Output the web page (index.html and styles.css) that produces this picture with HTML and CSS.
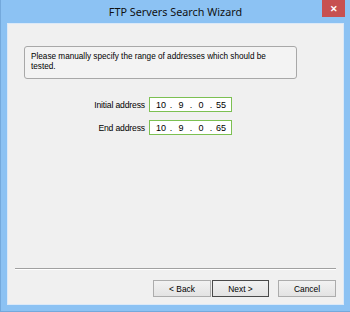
FILE: index.html
```html
<!DOCTYPE html>
<html lang="en">
<head>
    <meta charset="UTF-8">
    <title>FTP Servers Search Wizard</title>
    <link rel="stylesheet" href="styles.css">
</head>
<body>
    <div class="window">
        <div class="titlebar">
            <span class="title">FTP Servers Search Wizard</span>
            <span class="close">&#x2715;</span>
        </div>

        <div class="panel">
            <div class="hint">Please manually specify the range of addresses which should be tested.</div>

            <div class="fields">
                <label>Initial address</label>
                <div class="ip">
                    <span class="oct">10</span><span class="dot">.</span>
                    <span class="oct">9</span><span class="dot">.</span>
                    <span class="oct">0</span><span class="dot">.</span>
                    <span class="oct">55</span>
                </div>

                <label>End address</label>
                <div class="ip">
                    <span class="oct">10</span><span class="dot">.</span>
                    <span class="oct">9</span><span class="dot">.</span>
                    <span class="oct">0</span><span class="dot">.</span>
                    <span class="oct">65</span>
                </div>
            </div>

            <div class="spacer"></div>

            <div class="separator"></div>

            <div class="buttons">
                <button class="btn">&lt; Back</button>
                <button class="btn default">Next &gt;</button>
                <button class="btn cancel">Cancel</button>
            </div>
        </div>
    </div>
</body>
</html>
```

FILE: styles.css
```css
html, body {
    margin: 0;
    padding: 0;
}

body {
    font-family: "Liberation Sans", Arial, sans-serif;
    font-size: 8.4px;
    color: #000;
}

.window {
    width: 350px;
    height: 312px;
    box-sizing: border-box;
    background-color: #8cc2f3;
    border-left: 1px solid #74a9dc;
    border-bottom: 1px solid #74a9dc;
    padding: 0 6px 6px 6px;
    display: flex;
    flex-direction: column;
}

.titlebar {
    height: 23px;
    position: relative;
    display: flex;
    align-items: center;
    justify-content: center;
}

.title {
    font-family: "Noto Sans", "Open Sans", sans-serif;
    font-size: 10.8px;
    color: #111;
    margin-top: -1px;
}

.close {
    position: absolute;
    top: 0;
    right: -1px;
    width: 23px;
    height: 17px;
    background-color: #c75050;
    color: #fff;
    font-size: 9px;
    font-weight: bold;
    display: flex;
    align-items: center;
    justify-content: center;
}

.panel {
    flex: 1;
    background-color: #f0f0f0;
    border: 1px solid #dbe9f8;
    display: flex;
    flex-direction: column;
}

.hint {
    margin: 22px 0 0 16px;
    width: 273px;
    height: 33px;
    box-sizing: border-box;
    border: 1px solid #a8a8a8;
    border-radius: 3px;
    background-color: #f3f3f3;
    padding: 5px 6px 0 6px;
    line-height: 10px;
    font-size: 8.2px;
}

.fields {
    margin: 18px 0 0 57px;
    display: grid;
    grid-template-columns: 80px 83px;
    column-gap: 4px;
    row-gap: 8px;
    align-items: center;
}

.fields label {
    text-align: right;
    font-size: 8.6px;
    letter-spacing: -0.15px;
}

.ip {
    height: 15px;
    box-sizing: border-box;
    border: 1px solid #7cc052;
    background-color: #fff;
    padding-left: 4px;
    display: flex;
    align-items: center;
    font-size: 9px;
}

.oct {
    width: 14px;
    text-align: center;
}

.dot {
    width: 6px;
    text-align: center;
}

.spacer {
    flex: 1;
}

.separator {
    margin: 0 7px 0 7px;
    border-top: 1px solid #a0a0a0;
    border-bottom: 1px solid #fff;
}

.buttons {
    display: flex;
    justify-content: flex-end;
    margin: 10px 7px 7px 0;
}

.btn {
    width: 58px;
    height: 17px;
    padding: 0;
    margin: 0;
    font-family: "Liberation Sans", Arial, sans-serif;
    font-size: 8.4px;
    color: #000;
    border: 1px solid #acacac;
    background: linear-gradient(#f2f2f2, #e3e3e3);
}

.btn.default {
    border: 1px solid #4a4a4a;
    margin-left: 1px;
    width: 57px;
}

.btn.cancel {
    margin-left: 9px;
}
```
